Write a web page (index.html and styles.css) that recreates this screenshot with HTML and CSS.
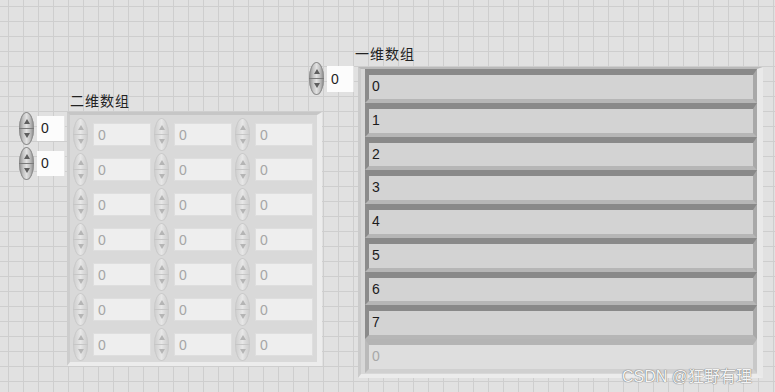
FILE: index.html
```html
<!DOCTYPE html>
<html lang="zh">
<head>
    <meta charset="UTF-8">
    <title>前面板</title>
    <link rel="stylesheet" href="styles.css">
</head>
<body>
    <div class="panel">

        <!-- 二维数组 -->
        <div class="ctrl ctrl-2d">
            <div class="idx-col">
                <div class="idx">
                    <div class="spin"><span class="up"></span><span class="dn"></span></div>
                    <div class="idx-box">0</div>
                </div>
                <div class="idx">
                    <div class="spin"><span class="up"></span><span class="dn"></span></div>
                    <div class="idx-box">0</div>
                </div>
            </div>
            <div class="arr-col">
                <div class="label">二维数组</div>
                <div class="frame2">
                    <div class="cell"><div class="spin off"><span class="up"></span><span class="dn"></span></div><div class="num">0</div></div>
                    <div class="cell"><div class="spin off"><span class="up"></span><span class="dn"></span></div><div class="num">0</div></div>
                    <div class="cell"><div class="spin off"><span class="up"></span><span class="dn"></span></div><div class="num">0</div></div>
                    <div class="cell"><div class="spin off"><span class="up"></span><span class="dn"></span></div><div class="num">0</div></div>
                    <div class="cell"><div class="spin off"><span class="up"></span><span class="dn"></span></div><div class="num">0</div></div>
                    <div class="cell"><div class="spin off"><span class="up"></span><span class="dn"></span></div><div class="num">0</div></div>
                    <div class="cell"><div class="spin off"><span class="up"></span><span class="dn"></span></div><div class="num">0</div></div>
                    <div class="cell"><div class="spin off"><span class="up"></span><span class="dn"></span></div><div class="num">0</div></div>
                    <div class="cell"><div class="spin off"><span class="up"></span><span class="dn"></span></div><div class="num">0</div></div>
                    <div class="cell"><div class="spin off"><span class="up"></span><span class="dn"></span></div><div class="num">0</div></div>
                    <div class="cell"><div class="spin off"><span class="up"></span><span class="dn"></span></div><div class="num">0</div></div>
                    <div class="cell"><div class="spin off"><span class="up"></span><span class="dn"></span></div><div class="num">0</div></div>
                    <div class="cell"><div class="spin off"><span class="up"></span><span class="dn"></span></div><div class="num">0</div></div>
                    <div class="cell"><div class="spin off"><span class="up"></span><span class="dn"></span></div><div class="num">0</div></div>
                    <div class="cell"><div class="spin off"><span class="up"></span><span class="dn"></span></div><div class="num">0</div></div>
                    <div class="cell"><div class="spin off"><span class="up"></span><span class="dn"></span></div><div class="num">0</div></div>
                    <div class="cell"><div class="spin off"><span class="up"></span><span class="dn"></span></div><div class="num">0</div></div>
                    <div class="cell"><div class="spin off"><span class="up"></span><span class="dn"></span></div><div class="num">0</div></div>
                    <div class="cell"><div class="spin off"><span class="up"></span><span class="dn"></span></div><div class="num">0</div></div>
                    <div class="cell"><div class="spin off"><span class="up"></span><span class="dn"></span></div><div class="num">0</div></div>
                    <div class="cell"><div class="spin off"><span class="up"></span><span class="dn"></span></div><div class="num">0</div></div>
                </div>
            </div>
        </div>

        <!-- 一维数组 -->
        <div class="ctrl ctrl-1d">
            <div class="idx-col">
                <div class="idx">
                    <div class="spin"><span class="up"></span><span class="dn"></span></div>
                    <div class="idx-box">0</div>
                </div>
            </div>
            <div class="arr-col">
                <div class="label">一维数组</div>
                <div class="frame1">
                    <div class="el">0</div>
                    <div class="el">1</div>
                    <div class="el">2</div>
                    <div class="el">3</div>
                    <div class="el">4</div>
                    <div class="el">5</div>
                    <div class="el">6</div>
                    <div class="el">7</div>
                    <div class="el off">0</div>
                </div>
            </div>
        </div>

        <div class="mark">CSDN @狂野有理</div>
    </div>
</body>
</html>
```

FILE: styles.css
```css
* {
    margin: 0;
    padding: 0;
    box-sizing: border-box;
}

body {
    font-family: "Liberation Sans", "Noto Sans CJK SC", sans-serif;
    font-size: 14px;
    color: #1e1e1e;
    background-color: #e1e1e1;
    overflow: hidden;
}

/* 前面板网格 */
.panel {
    position: relative;
    width: 775px;
    height: 392px;
    background-color: #e1e1e1;
    background-image:
        linear-gradient(to right, #cecece 1px, transparent 1px),
        linear-gradient(to bottom, #cecece 1px, transparent 1px);
    background-size: 15px 15px;
    background-position: 8px 6px;
}

/* 控件放在面板上的位置 */
.ctrl {
    position: absolute;
    display: flex;
}

.ctrl-2d {
    left: 19px;
    top: 90px;
    gap: 2px;
}

.ctrl-1d {
    left: 309px;
    top: 44px;
    gap: 4px;
}

.label {
    height: 22px;
    line-height: 20px;
    font-family: "Noto Sans CJK SC", sans-serif;
    font-size: 14px;
    letter-spacing: 1px;
    color: #222;
}

.ctrl-2d .label {
    padding-left: 3px;
}

.ctrl-1d .label {
    height: 19px;
    line-height: 18px;
    margin-left: -3px;
}

/* 索引 */
.ctrl-2d .idx-col {
    padding-top: 22px;
    display: flex;
    flex-direction: column;
    gap: 2px;
}

.ctrl-1d .idx-col {
    padding-top: 18px;
}

.idx {
    display: flex;
    align-items: center;
    gap: 3px;
    height: 33px;
}

.idx-box {
    width: 28px;
    height: 25px;
    line-height: 25px;
    padding-left: 4px;
    background: #fcfcfc;
    border-right: 1px solid #e6e6e6;
}

.ctrl-1d .idx-box {
    width: 27px;
    height: 26px;
    line-height: 26px;
}

/* 增减按钮 */
.spin {
    width: 15px;
    height: 33px;
    border-radius: 50%;
    display: flex;
    flex-direction: column;
    background: linear-gradient(90deg, #8c8c8c 0%, #c4c4c4 28%, #e2e2e2 50%, #c2c2c2 72%, #878787 100%);
    box-shadow: inset 0 0 0 1px #8e8e8e;
    flex-shrink: 0;
}

.spin span {
    flex: 1;
    display: flex;
    justify-content: center;
    align-items: center;
}

.spin .up {
    border-bottom: 1px solid #7a7a7a;
}

.spin .up::after {
    content: "";
    border-left: 3px solid transparent;
    border-right: 3px solid transparent;
    border-bottom: 5px solid #5e5e5e;
    margin-top: 3px;
}

.spin .dn::after {
    content: "";
    border-left: 3px solid transparent;
    border-right: 3px solid transparent;
    border-top: 5px solid #5e5e5e;
    margin-bottom: 3px;
}

.spin.off {
    background: linear-gradient(90deg, #cdcdcd 0%, #dcdcdc 30%, #e7e7e7 50%, #dadada 70%, #cbcbcb 100%);
    box-shadow: inset 0 0 0 1px #cacaca;
}

.spin.off .up {
    border-bottom-color: #c6c6c6;
}

.spin.off .up::after {
    border-bottom-color: #b5b5b5;
}

.spin.off .dn::after {
    border-top-color: #b5b5b5;
}

/* 二维数组框 */
.frame2 {
    display: grid;
    grid-template-columns: repeat(3, 81px);
    grid-auto-rows: 35px;
    background: #d9d9d9;
    border-top: 3px solid #c6c6c6;
    border-left: 3px solid #cdcdcd;
    border-right: 5px solid #ececec;
    border-bottom: 4px solid #ececec;
    padding: 2px 1px 0 3px;
}

.cell {
    display: flex;
    align-items: center;
    gap: 5px;
}

.num {
    width: 58px;
    height: 23px;
    line-height: 23px;
    padding-left: 4px;
    background: #eeeeee;
    border: 1px solid #dedede;
    color: #a6a6a6;
}

/* 一维数组框 */
.frame1 {
    width: 405px;
    margin-top: 4px;
    background: #d8d8d8;
    border-top: 2px solid #b9b9b9;
    border-left: 3px solid #cbcbcb;
    border-right: 6px solid #e9e9e9;
    border-bottom: 4px solid #ececec;
    padding: 0 0 1px 4px;
}

.el {
    height: 33.75px;
    line-height: 23px;
    padding-left: 3px;
    background: #d3d3d3;
    border-top: 6px solid #898989;
    border-left: 4px solid #8b8b8b;
    border-right: 4px solid #a8a8a8;
    border-bottom: 4px solid #b6b6b6;
    color: #1c1c1c;
}

.el.off {
    background: #dedede;
    border-top-color: #b4b4b4;
    border-left-color: #bababa;
    border-right-color: #c8c8c8;
    border-bottom-color: #d0d0d0;
    color: #a8a8a8;
}

/* 水印 */
.mark {
    position: absolute;
    left: 622px;
    top: 363px;
    font-family: "Liberation Sans", "Noto Sans CJK SC", sans-serif;
    font-size: 16px;
    color: #f4f4f4;
    text-shadow: 0 0 1px #6e6e6e, 0 0 1px #6e6e6e;
}
```
